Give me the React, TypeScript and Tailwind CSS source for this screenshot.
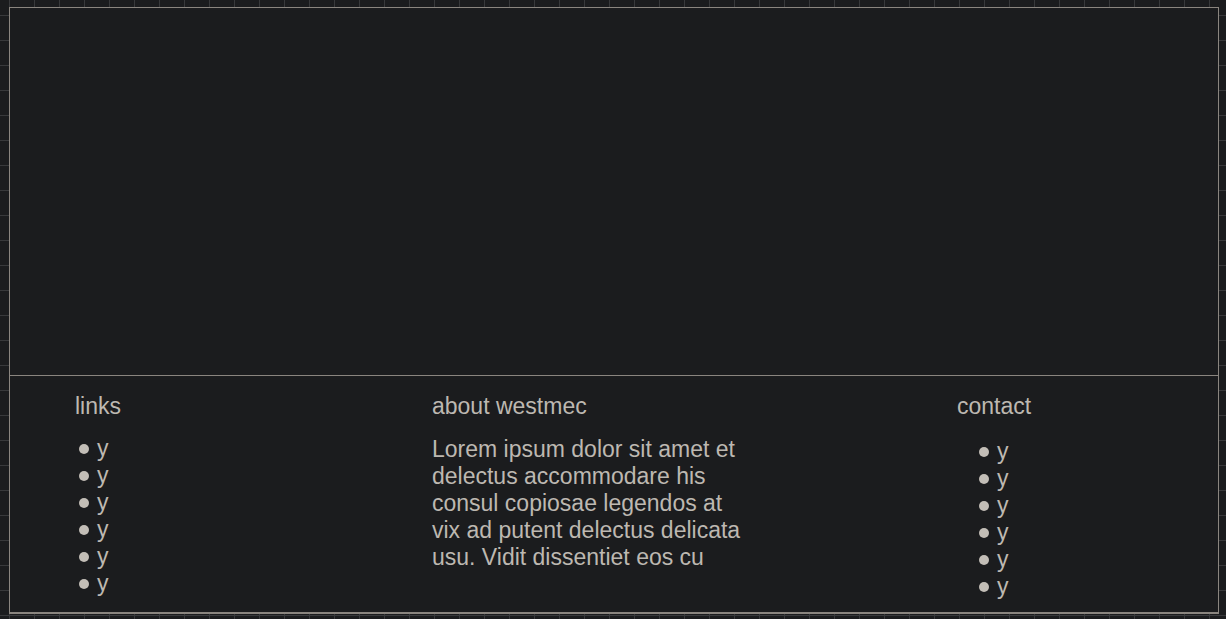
import React from "react";

const Bullet = () => (
  <span className="inline-block w-[10px] h-[10px] rounded-full bg-[#c3beb7] shrink-0" />
);

function List({ indent, top }: { indent: string; top: string }) {
  return (
    <ul className={top}>
      {Array.from({ length: 6 }).map((_, i) => (
        <li key={i} className={`flex items-center h-[27px] ${indent}`}>
          <Bullet />
          <span className="ml-[8px]">y</span>
        </li>
      ))}
    </ul>
  );
}

export default function App() {
  return (
    <div
      className="w-[1226px] h-[619px] overflow-hidden pt-[7px] pl-[9px] bg-[#1b1c1e] bg-[linear-gradient(to_right,#38393b_1px,transparent_1px),linear-gradient(to_bottom,#38393b_1px,transparent_1px)] bg-[length:25px_25px] bg-[position:9px_15px]"
      style={{ fontFamily: '"Liberation Sans", Arial, sans-serif' }}
    >
      <div className="w-[1210px] h-[607px] border border-b-2 border-[#8a857f] bg-[#1b1c1e] flex flex-col text-[#bdb8b1] text-[23px] leading-[27px]">
        <div className="h-[368px] shrink-0 border-b border-[#8a857f]" />
        <footer className="flex pt-[17px] pl-[65px]">
          <div className="w-[357px] shrink-0">
            <h3>links</h3>
            <List indent="pl-[4px]" top="mt-[15px]" />
          </div>
          <div className="w-[525px] shrink-0">
            <h3>about westmec</h3>
            <p className="mt-[16px] w-[318px]">
              Lorem ipsum dolor sit amet et delectus accommodare his consul copiosae legendos at vix ad putent delectus delicata usu. Vidit dissentiet eos cu
            </p>
          </div>
          <div>
            <h3>contact</h3>
            <List indent="pl-[22px]" top="mt-[18px]" />
          </div>
        </footer>
      </div>
    </div>
  );
}
